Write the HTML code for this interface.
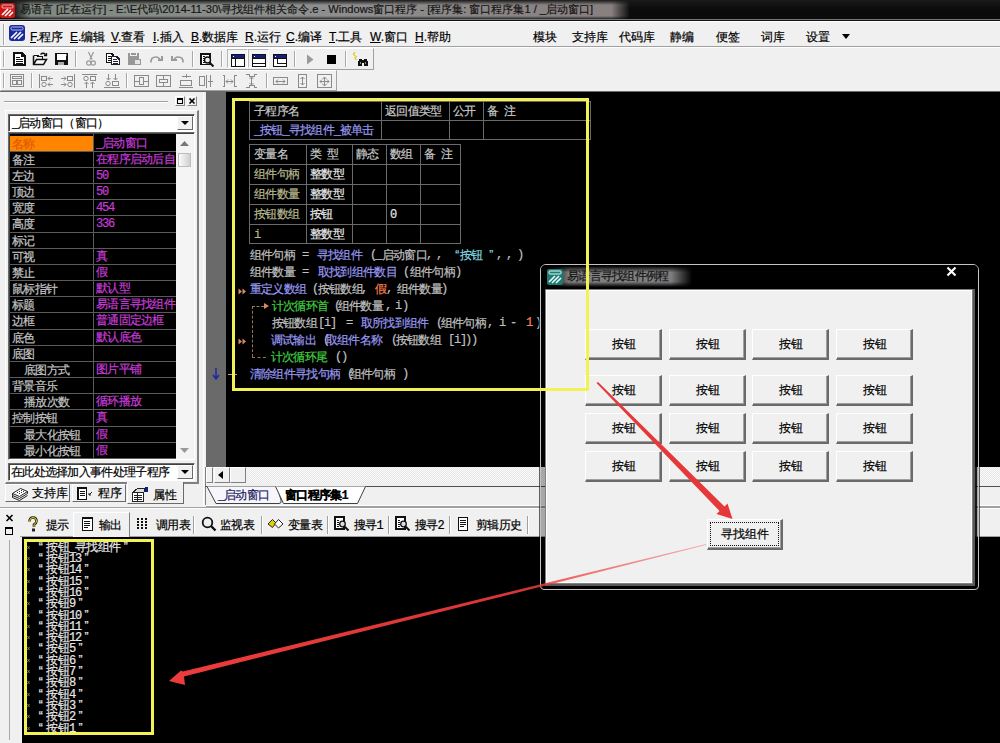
<!DOCTYPE html><html><head><meta charset="utf-8"><style>
*{box-sizing:border-box}
html,body{margin:0;padding:0}
body{width:1000px;height:743px;overflow:hidden;position:relative;background:#f0f0f0;font-family:"Liberation Sans",sans-serif;font-size:12px;color:#000}
.ab{position:absolute}
.t{position:absolute;white-space:nowrap;line-height:1;-webkit-text-stroke:0.2px}
.m{font-family:"Liberation Mono",monospace;letter-spacing:-1.2px}
.c{display:inline-block;width:11.3px;text-align:center}
</style></head><body>

<div class="ab" style="left:0;top:0;width:1000px;height:21px;background:linear-gradient(#1a1a1a,#0c0c0c 40%,#0a0a0a)"></div>
<div class="ab" style="left:12px;top:0px;width:618px;height:20px;background:linear-gradient(90deg,rgba(140,150,140,0),rgba(140,150,140,.9) 3%,rgba(150,150,150,.95) 50%,rgba(150,140,140,.9) 97%,rgba(140,140,140,0));-webkit-mask-image:linear-gradient(transparent,#000 25%,#000 80%,transparent)"></div>
<div class="ab" style="left:0;top:19px;width:1000px;height:1px;background:#777"></div>
<div class="ab" style="left:0;top:20px;width:1000px;height:1px;background:#111"></div>
<svg class="ab" style="left:0;top:3px" width="15" height="15" viewBox="0 0 15 15">
<rect x="0" y="0" width="15" height="15" rx="2" fill="#c81818"/>
<rect x="2" y="2" width="11" height="3" rx="1" fill="none" stroke="#f3b0b0" stroke-width="1"/>
<path d="M2 12 L8 6 M5 13 L11 7 M9 13 L13 9" stroke="#fff" stroke-width="1.6"/></svg>
<div class="t" id="ttl" style="left:20px;top:4px;font-size:11.1px;color:#161616">易语言 [正在运行] - E:\E代码\2014-11-30\寻找组件相关命令.e - Windows窗口程序 - [程序集: 窗口程序集1 / _启动窗口]</div>
<div class="ab" style="left:0;top:21px;width:1000px;height:1px;background:#fff"></div>
<div class="ab" style="left:0;top:46px;width:1000px;height:1px;background:#a0a0a0"></div>
<div class="ab" style="left:0;top:47px;width:1000px;height:1px;background:#fff"></div>
<div class="ab" style="left:3px;top:24px;width:1px;height:21px;background:#a8a8a8"></div>
<div class="ab" style="left:4px;top:24px;width:1px;height:21px;background:#fff"></div>
<svg class="ab" style="left:9px;top:25px" width="16" height="16" viewBox="0 0 16 16">
<rect x="0" y="0" width="16" height="16" rx="3" fill="#1a2a9a"/>
<rect x="2" y="2" width="12" height="3" rx="1.2" fill="none" stroke="#b8c0f0" stroke-width="1"/>
<path d="M2 13 L8 7 M5 14 L12 7 M9 14 L14 9" stroke="#fff" stroke-width="1.6"/></svg>
<div class="t" style="left:30px;top:31px;font-size:12px"><u>F</u>.程序</div>
<div class="t" style="left:70px;top:31px;font-size:12px"><u>E</u>.编辑</div>
<div class="t" style="left:111px;top:31px;font-size:12px"><u>V</u>.查看</div>
<div class="t" style="left:153px;top:31px;font-size:12px"><u>I</u>.插入</div>
<div class="t" style="left:191px;top:31px;font-size:12px"><u>B</u>.数据库</div>
<div class="t" style="left:245px;top:31px;font-size:12px"><u>R</u>.运行</div>
<div class="t" style="left:286px;top:31px;font-size:12px"><u>C</u>.编译</div>
<div class="t" style="left:329px;top:31px;font-size:12px"><u>T</u>.工具</div>
<div class="t" style="left:370px;top:31px;font-size:12px"><u>W</u>.窗口</div>
<div class="t" style="left:415px;top:31px;font-size:12px"><u>H</u>.帮助</div>
<div class="t" style="left:533px;top:31px;font-size:12px">模块</div>
<div class="t" style="left:572px;top:31px;font-size:12px">支持库</div>
<div class="t" style="left:619px;top:31px;font-size:12px">代码库</div>
<div class="t" style="left:670px;top:31px;font-size:12px">静编</div>
<div class="t" style="left:716px;top:31px;font-size:12px">便签</div>
<div class="t" style="left:761px;top:31px;font-size:12px">词库</div>
<div class="t" style="left:806px;top:31px;font-size:12px">设置</div>
<svg class="ab" style="left:842px;top:34px" width="8" height="5"><path d="M0 0H8L4 5Z" fill="#000"/></svg>
<div class="ab" style="left:0px;top:48px;width:374px;height:22px;border-top:1px solid #fff;border-left:1px solid #fff;border-right:1px solid #a0a0a0;border-bottom:1px solid #a0a0a0"></div>
<div class="ab" style="left:3px;top:51px;width:1px;height:16px;background:#a8a8a8"></div>
<div class="ab" style="left:4px;top:51px;width:1px;height:16px;background:#fff"></div>
<div class="ab" style="left:0px;top:70px;width:337px;height:21px;border-top:1px solid #fff;border-left:1px solid #fff;border-right:1px solid #a0a0a0;border-bottom:1px solid #a0a0a0"></div>
<div class="ab" style="left:3px;top:73px;width:1px;height:15px;background:#a8a8a8"></div>
<div class="ab" style="left:4px;top:73px;width:1px;height:15px;background:#fff"></div>
<div class="ab" style="left:0;top:91px;width:1000px;height:1px;background:#6a6a6a"></div>
<div class="ab" style="left:75px;top:51px;width:1px;height:16px;background:#a8a8a8"></div>
<div class="ab" style="left:76px;top:51px;width:1px;height:16px;background:#fff"></div>
<div class="ab" style="left:192px;top:51px;width:1px;height:16px;background:#a8a8a8"></div>
<div class="ab" style="left:193px;top:51px;width:1px;height:16px;background:#fff"></div>
<div class="ab" style="left:221px;top:51px;width:1px;height:16px;background:#a8a8a8"></div>
<div class="ab" style="left:222px;top:51px;width:1px;height:16px;background:#fff"></div>
<div class="ab" style="left:294px;top:51px;width:1px;height:16px;background:#a8a8a8"></div>
<div class="ab" style="left:295px;top:51px;width:1px;height:16px;background:#fff"></div>
<div class="ab" style="left:345px;top:51px;width:1px;height:16px;background:#a8a8a8"></div>
<div class="ab" style="left:346px;top:51px;width:1px;height:16px;background:#fff"></div>
<div class="ab" style="left:31px;top:73px;width:1px;height:15px;background:#a8a8a8"></div>
<div class="ab" style="left:32px;top:73px;width:1px;height:15px;background:#fff"></div>
<div class="ab" style="left:126px;top:73px;width:1px;height:15px;background:#a8a8a8"></div>
<div class="ab" style="left:127px;top:73px;width:1px;height:15px;background:#fff"></div>
<div class="ab" style="left:266px;top:73px;width:1px;height:15px;background:#a8a8a8"></div>
<div class="ab" style="left:267px;top:73px;width:1px;height:15px;background:#fff"></div>
<div class="ab" style="left:227px;top:49px;width:21px;height:19px;border:1px solid;border-color:#b8b8b8 #fff #fff #b8b8b8;background:#f4f4f4"></div>
<div class="ab" style="left:248px;top:49px;width:21px;height:19px;border:1px solid;border-color:#b8b8b8 #fff #fff #b8b8b8;background:#f4f4f4"></div>
<svg class="ab" style="left:13px;top:52px" width="13" height="14" shape-rendering="crispEdges"><path d="M0 0H9L13 4V14H0Z" fill="#111"/><path d="M2 2H8V5H11V12H2Z" fill="#fff"/><path d="M3 5H7V6H3ZM3 7H10V8H3ZM3 9H10V10H3ZM3 11H10V12H3Z" fill="#111"/></svg>
<svg class="ab" style="left:32px;top:52px" width="16" height="14" shape-rendering="crispEdges"><path d="M1.5 3.5H5.5L6.5 4.5H10.5V6.5" fill="none" stroke="#111" stroke-width="1.5"/><path d="M1.5 3.5V12.5H11.5L14.5 7.5H4.5L1.5 12.5" fill="#fff" stroke="#111" stroke-width="1.5" shape-rendering="auto"/><path d="M8.5 2.5Q11 0 13.5 2.5M12 3.5H14.5V1" fill="none" stroke="#111" stroke-width="1.3" shape-rendering="auto"/></svg>
<svg class="ab" style="left:54px;top:52px" width="15" height="14" shape-rendering="crispEdges"><rect x="1" y="1" width="13" height="12" fill="#111"/><rect x="3" y="2" width="9" height="6" fill="#fff"/><rect x="4" y="10" width="6" height="3" fill="#aaa"/><rect x="12" y="2" width="1" height="2" fill="#777"/></svg>
<svg class="ab" style="left:86px;top:51px" width="10" height="16" shape-rendering="crispEdges"><path d="M2.5 1L6 8.5M7.5 1L4 8.5" stroke="#999" stroke-width="1.2" shape-rendering="auto"/><circle cx="2.8" cy="12" r="2.2" fill="none" stroke="#999" stroke-width="1.2" shape-rendering="auto"/><circle cx="7.2" cy="12" r="2.2" fill="none" stroke="#999" stroke-width="1.2" shape-rendering="auto"/></svg>
<svg class="ab" style="left:105px;top:52px" width="16" height="14" shape-rendering="crispEdges"><path d="M1.5 1.5H6.5L8.5 3.5V10.5H1.5Z" fill="#fff" stroke="#111" stroke-width="1.5"/><path d="M3 4.5H6M3 6.5H6M3 8.5H6" stroke="#111"/><path d="M6.5 4.5H11.5L14.5 7.5V12.5H6.5Z" fill="#fff" stroke="#223" stroke-width="1.6"/><path d="M8 7.5H12M8 9.5H13M8 11.5H13" stroke="#223"/></svg>
<svg class="ab" style="left:127px;top:51px" width="15" height="15" shape-rendering="crispEdges"><rect x="1" y="2" width="11" height="12" rx="1.5" fill="#979797"/><rect x="3.5" y="1" width="6" height="3" fill="#979797" stroke="#f0f0f0"/><rect x="7.5" y="8.5" width="6" height="5" fill="#e4e4e4" stroke="#979797"/></svg>
<svg class="ab" style="left:149px;top:55px" width="14" height="9" shape-rendering="crispEdges"><path d="M2 7.5Q1.5 2 7 2Q10 2 11 5" fill="none" stroke="#9a9a9a" stroke-width="1.6" shape-rendering="auto"/><path d="M8.5 5H13V1" fill="none" stroke="#9a9a9a" stroke-width="1.6"/></svg>
<svg class="ab" style="left:171px;top:55px" width="14" height="9" shape-rendering="crispEdges"><path d="M12 7.5Q12.5 2 7 2Q4 2 3 5" fill="none" stroke="#9a9a9a" stroke-width="1.6" shape-rendering="auto"/><path d="M5.5 5H1V1" fill="none" stroke="#9a9a9a" stroke-width="1.6"/></svg>
<svg class="ab" style="left:199px;top:52px" width="16" height="15" shape-rendering="crispEdges"><rect x="1" y="1" width="11" height="12" fill="#111"/><rect x="3" y="2.5" width="7" height="9" fill="#fff"/><path d="M3.5 4.5H6M3.5 6.5H6M3.5 8.5H6M3.5 10.5H6" stroke="#111"/><circle cx="8.5" cy="8" r="3" fill="#eee" stroke="#111" stroke-width="1.4" shape-rendering="auto"/><path d="M10.5 10.5L14.5 14.5" stroke="#111" stroke-width="2" shape-rendering="auto"/></svg>
<svg class="ab" style="left:231px;top:54px" width="14" height="13" shape-rendering="crispEdges"><rect x="0.5" y="0.5" width="13" height="12" fill="#fff" stroke="#111"/><rect x="1" y="1" width="12" height="3" fill="#10207a"/><rect x="2" y="2" width="1" height="1" fill="#fff"/><path d="M4.5 4V12" stroke="#111"/><path d="M1 4.5H13" stroke="#111"/></svg>
<svg class="ab" style="left:252px;top:54px" width="14" height="13" shape-rendering="crispEdges"><rect x="0.5" y="0.5" width="13" height="12" fill="#fff" stroke="#111"/><rect x="1" y="1" width="12" height="3" fill="#10207a"/><rect x="2" y="2" width="1" height="1" fill="#fff"/><path d="M1 4.5H13M1 9.5H13" stroke="#111"/></svg>
<svg class="ab" style="left:273px;top:54px" width="14" height="13" shape-rendering="crispEdges"><rect x="0.5" y="0.5" width="13" height="12" fill="#fff" stroke="#111"/><rect x="1" y="1" width="12" height="3" fill="#10207a"/><rect x="2" y="2" width="1" height="1" fill="#fff"/><path d="M4.5 4V9M1 4.5H13M4 9.5H13" stroke="#111"/></svg>
<svg class="ab" style="left:306px;top:54px" width="8" height="11" shape-rendering="crispEdges"><path d="M1 0.5L7.5 5.5L1 10.5Z" fill="#9a9a9a" shape-rendering="auto"/></svg>
<svg class="ab" style="left:327px;top:55px" width="9" height="9" shape-rendering="crispEdges"><rect x="0" y="0" width="9" height="9" fill="#000"/></svg>
<svg class="ab" style="left:352px;top:51px" width="18" height="16" shape-rendering="crispEdges"><path d="M3.5 1.5Q1.5 1.5 1.5 3Q1.5 4.5 3.5 4.5M5 5.5Q3 5.5 3 7Q3 8.5 5 8.5" fill="none" stroke="#e0c800" stroke-width="1.2" shape-rendering="auto"/><path d="M7 8H10V9H12V8H15V10H16V15H12V12H10V15H6V10H7Z" fill="#111"/><rect x="8" y="11" width="1" height="2" fill="#888"/><rect x="13" y="11" width="1" height="2" fill="#888"/></svg>
<svg class="ab" style="left:10px;top:74px" width="16" height="15" shape-rendering="crispEdges"><rect x="0.5" y="0.5" width="13" height="12" fill="none" stroke="#8a8a8a"/><rect x="2.5" y="2.5" width="9" height="2" fill="none" stroke="#8a8a8a"/><rect x="2.5" y="6.5" width="4" height="4" fill="none" stroke="#8a8a8a"/><rect x="7.5" y="6.5" width="4" height="4" fill="none" stroke="#8a8a8a"/></svg>
<svg class="ab" style="left:39px;top:74px" width="16" height="15" shape-rendering="crispEdges"><path d="M0.5 0V14" stroke="#8a8a8a"/><rect x="2.5" y="2.5" width="5" height="4" fill="none" stroke="#8a8a8a"/><circle cx="5" cy="10.5" r="2.2" fill="none" stroke="#8a8a8a" shape-rendering="auto"/><path d="M9 4.5H14M9 10.5H14" stroke="#8a8a8a"/><path d="M11 2.5L9 4.5L11 6.5M11 8.5L9 10.5L11 12.5" fill="none" stroke="#8a8a8a" shape-rendering="auto"/></svg>
<svg class="ab" style="left:60px;top:74px" width="16" height="15" shape-rendering="crispEdges"><path d="M14.5 0V14" stroke="#8a8a8a"/><rect x="7.5" y="2.5" width="5" height="4" fill="none" stroke="#8a8a8a"/><circle cx="10" cy="10.5" r="2.2" fill="none" stroke="#8a8a8a" shape-rendering="auto"/><path d="M1 4.5H6M1 10.5H6" stroke="#8a8a8a"/><path d="M4 2.5L6 4.5L4 6.5M4 8.5L6 10.5L4 12.5" fill="none" stroke="#8a8a8a" shape-rendering="auto"/></svg>
<svg class="ab" style="left:82px;top:74px" width="16" height="15" shape-rendering="crispEdges"><path d="M0 0.5H15" stroke="#8a8a8a"/><circle cx="4" cy="4.5" r="2.2" fill="none" stroke="#8a8a8a" shape-rendering="auto"/><rect x="8.5" y="2.5" width="5" height="4" fill="none" stroke="#8a8a8a"/><path d="M4.5 8V14M10.5 8V14" stroke="#8a8a8a"/><path d="M2.5 10L4.5 8L6.5 10M8.5 10L10.5 8L12.5 10" fill="none" stroke="#8a8a8a" shape-rendering="auto"/></svg>
<svg class="ab" style="left:104px;top:74px" width="16" height="15" shape-rendering="crispEdges"><path d="M0 13.5H16" stroke="#8a8a8a"/><circle cx="4" cy="9.5" r="2.2" fill="none" stroke="#8a8a8a" shape-rendering="auto"/><rect x="8.5" y="7.5" width="6" height="4" fill="none" stroke="#8a8a8a"/><path d="M4.5 0V6M11.5 0V6" stroke="#8a8a8a"/><path d="M2.5 4L4.5 6L6.5 4M9.5 4L11.5 6L13.5 4" fill="none" stroke="#8a8a8a" shape-rendering="auto"/></svg>
<svg class="ab" style="left:134px;top:74px" width="16" height="15" shape-rendering="crispEdges"><rect x="0.5" y="1.5" width="14" height="11" fill="none" stroke="#8a8a8a"/><rect x="5.5" y="3.5" width="4" height="7" fill="none" stroke="#8a8a8a"/><path d="M1 7.5H5M10 7.5H14" stroke="#8a8a8a"/></svg>
<svg class="ab" style="left:156px;top:74px" width="16" height="15" shape-rendering="crispEdges"><rect x="0.5" y="1.5" width="14" height="11" fill="none" stroke="#8a8a8a"/><rect x="3.5" y="5.5" width="8" height="3" fill="none" stroke="#8a8a8a"/><path d="M7.5 2V5M7.5 9V12" stroke="#8a8a8a"/></svg>
<svg class="ab" style="left:179px;top:74px" width="14" height="15" shape-rendering="crispEdges"><path d="M7.5 0V4M3 2.5H12M0 13.5H14" stroke="#8a8a8a"/><rect x="1.5" y="6.5" width="11" height="5" fill="none" stroke="#8a8a8a"/></svg>
<svg class="ab" style="left:199px;top:74px" width="14" height="15" shape-rendering="crispEdges"><rect x="0.5" y="2.5" width="5" height="9" fill="none" stroke="#8a8a8a"/><path d="M7.5 1V14M11.5 1V13M9 7.5H14" stroke="#8a8a8a"/></svg>
<svg class="ab" style="left:222px;top:74px" width="16" height="15" shape-rendering="crispEdges"><path d="M0.5 1.5H2.5V12.5H0.5M14.5 1.5H12.5V12.5H14.5M4 7.5H11" fill="none" stroke="#8a8a8a"/><path d="M6 5.5L4 7.5L6 9.5M9 5.5L11 7.5L9 9.5" fill="none" stroke="#8a8a8a" shape-rendering="auto"/></svg>
<svg class="ab" style="left:245px;top:74px" width="14" height="15" shape-rendering="crispEdges"><path d="M1 0.5H4V2.5H9V0.5H12M1 13.5H4V11.5H9V13.5H12M6.5 3V11" fill="none" stroke="#8a8a8a"/><path d="M4.5 5L6.5 3L8.5 5M4.5 9L6.5 11L8.5 9" fill="none" stroke="#8a8a8a" shape-rendering="auto"/></svg>
<svg class="ab" style="left:273px;top:74px" width="16" height="15" shape-rendering="crispEdges"><rect x="0.5" y="3.5" width="14" height="7" fill="none" stroke="#8a8a8a"/><path d="M3 7.5H12" stroke="#8a8a8a"/><path d="M5 5.5L3 7.5L5 9.5M10 5.5L12 7.5L10 9.5" fill="none" stroke="#8a8a8a" shape-rendering="auto"/></svg>
<svg class="ab" style="left:297px;top:74px" width="12" height="15" shape-rendering="crispEdges"><rect x="1.5" y="0.5" width="8" height="13" fill="none" stroke="#8a8a8a"/><path d="M5.5 3V11" stroke="#8a8a8a"/><path d="M3.5 5L5.5 3L7.5 5M3.5 9L5.5 11L7.5 9" fill="none" stroke="#8a8a8a" shape-rendering="auto"/></svg>
<svg class="ab" style="left:317px;top:74px" width="16" height="15" shape-rendering="crispEdges"><rect x="0.5" y="0.5" width="14" height="13" fill="none" stroke="#8a8a8a"/><path d="M3 7.5H12M7.5 3V12" stroke="#8a8a8a"/><path d="M5 5.5L3 7.5L5 9.5M10 5.5L12 7.5L10 9.5M5.5 5L7.5 3L9.5 5M5.5 10L7.5 12L9.5 10" fill="none" stroke="#8a8a8a" shape-rendering="auto"/></svg>
<div class="ab" style="left:0;top:92px;width:205px;height:416px;background:#f0f0f0"></div>
<div class="ab" style="left:203px;top:92px;width:1px;height:414px;background:#fff"></div>
<div class="ab" style="left:4px;top:101px;width:164px;height:1px;background:#a0a0a0"></div>
<div class="ab" style="left:4px;top:102px;width:164px;height:1px;background:#fff"></div>
<div class="ab" style="left:175px;top:96px;width:10px;height:10px;border:1px solid;border-color:#fff #888 #888 #fff"></div>
<div class="ab" style="left:177px;top:98px;width:6px;height:6px;border:1px solid #000;border-top-width:2px"></div>
<div class="ab" style="left:187px;top:96px;width:10px;height:10px;border:1px solid;border-color:#fff #888 #888 #fff"></div>
<svg class="ab" style="left:188px;top:97px" width="8" height="8"><path d="M1.5 1.5L6.5 6.5M6.5 1.5L1.5 6.5" stroke="#000" stroke-width="1.6"/></svg>
<div class="ab" style="left:5px;top:110px;width:194px;height:374px;border-style:solid;border-width:1px 2px 2px 1px;border-color:#fff #808080 #808080 #fff"></div>
<div class="ab" style="left:8px;top:114px;width:187px;height:18px;background:#fff;border:1px solid;border-color:#6a6a6a #fff #fff #6a6a6a;box-shadow:inset 1px 1px 0 #404040"></div>
<div class="t" style="left:12px;top:117px;font-size:12px"><span class="m">_</span><span class="c">启</span><span class="c">动</span><span class="c">窗</span><span class="c">口</span><span class="c">（</span><span class="c">窗</span><span class="c">口</span><span class="c">）</span></div>
<div class="ab" style="left:177px;top:116px;width:16px;height:14px;background:#f0f0f0;border:1px solid;border-color:#fff #6a6a6a #6a6a6a #fff"></div>
<svg class="ab" style="left:181px;top:121px" width="8" height="4"><path d="M0 0H8L4 4Z" fill="#000"/></svg>
<div class="ab" style="left:8px;top:132px;width:187px;height:328px;background:#f0f0f0;border:1px solid;border-color:#6a6a6a #fff #fff #6a6a6a;box-shadow:inset 1px 1px 0 #404040"></div>
<div class="ab" style="left:10px;top:134px;width:166px;height:325px;background:#000"></div>
<div class="ab" style="left:10px;top:136px;width:83px;height:15px;background:#ff8400"></div>
<div class="t" style="left:12px;top:138px;font-size:12px;color:#e05a00"><span class="c">名</span><span class="c">称</span></div>
<div class="t" style="left:96px;top:136px;font-size:12px;line-height:15px;height:15px;color:#c83cd8;width:80px;overflow:hidden"><span class="m">_</span><span class="c">启</span><span class="c">动</span><span class="c">窗</span><span class="c">口</span></div>
<div class="ab" style="left:10px;top:151px;width:166px;height:1px;background:#5a5a5a"></div>
<div class="t" style="left:12px;top:154px;font-size:12px;color:#c4c4c4"><span class="c">备</span><span class="c">注</span></div>
<div class="t" style="left:96px;top:152px;font-size:12px;line-height:15px;height:15px;color:#c83cd8;width:80px;overflow:hidden"><span class="c">在</span><span class="c">程</span><span class="c">序</span><span class="c">启</span><span class="c">动</span><span class="c">后</span><span class="c">自</span></div>
<div class="ab" style="left:10px;top:167px;width:166px;height:1px;background:#5a5a5a"></div>
<div class="t" style="left:12px;top:170px;font-size:12px;color:#c4c4c4"><span class="c">左</span><span class="c">边</span></div>
<div class="t" style="left:96px;top:168px;font-size:12px;line-height:15px;height:15px;color:#c83cd8;width:80px;overflow:hidden"><span class="m">50</span></div>
<div class="ab" style="left:10px;top:183px;width:166px;height:1px;background:#5a5a5a"></div>
<div class="t" style="left:12px;top:186px;font-size:12px;color:#c4c4c4"><span class="c">顶</span><span class="c">边</span></div>
<div class="t" style="left:96px;top:184px;font-size:12px;line-height:15px;height:15px;color:#c83cd8;width:80px;overflow:hidden"><span class="m">50</span></div>
<div class="ab" style="left:10px;top:199px;width:166px;height:1px;background:#5a5a5a"></div>
<div class="t" style="left:12px;top:202px;font-size:12px;color:#c4c4c4"><span class="c">宽</span><span class="c">度</span></div>
<div class="t" style="left:96px;top:200px;font-size:12px;line-height:15px;height:15px;color:#c83cd8;width:80px;overflow:hidden"><span class="m">454</span></div>
<div class="ab" style="left:10px;top:215px;width:166px;height:1px;background:#5a5a5a"></div>
<div class="t" style="left:12px;top:218px;font-size:12px;color:#c4c4c4"><span class="c">高</span><span class="c">度</span></div>
<div class="t" style="left:96px;top:216px;font-size:12px;line-height:15px;height:15px;color:#c83cd8;width:80px;overflow:hidden"><span class="m">336</span></div>
<div class="ab" style="left:10px;top:232px;width:166px;height:1px;background:#5a5a5a"></div>
<div class="t" style="left:12px;top:235px;font-size:12px;color:#c4c4c4"><span class="c">标</span><span class="c">记</span></div>
<div class="t" style="left:96px;top:233px;font-size:12px;line-height:15px;height:15px;color:#c83cd8;width:80px;overflow:hidden"></div>
<div class="ab" style="left:10px;top:248px;width:166px;height:1px;background:#5a5a5a"></div>
<div class="t" style="left:12px;top:251px;font-size:12px;color:#c4c4c4"><span class="c">可</span><span class="c">视</span></div>
<div class="t" style="left:96px;top:249px;font-size:12px;line-height:15px;height:15px;color:#c83cd8;width:80px;overflow:hidden"><span class="c">真</span></div>
<div class="ab" style="left:10px;top:264px;width:166px;height:1px;background:#5a5a5a"></div>
<div class="t" style="left:12px;top:267px;font-size:12px;color:#c4c4c4"><span class="c">禁</span><span class="c">止</span></div>
<div class="t" style="left:96px;top:265px;font-size:12px;line-height:15px;height:15px;color:#c83cd8;width:80px;overflow:hidden"><span class="c">假</span></div>
<div class="ab" style="left:10px;top:280px;width:166px;height:1px;background:#5a5a5a"></div>
<div class="t" style="left:12px;top:283px;font-size:12px;color:#c4c4c4"><span class="c">鼠</span><span class="c">标</span><span class="c">指</span><span class="c">针</span></div>
<div class="t" style="left:96px;top:281px;font-size:12px;line-height:15px;height:15px;color:#c83cd8;width:80px;overflow:hidden"><span class="c">默</span><span class="c">认</span><span class="c">型</span></div>
<div class="ab" style="left:10px;top:296px;width:166px;height:1px;background:#5a5a5a"></div>
<div class="t" style="left:12px;top:299px;font-size:12px;color:#c4c4c4"><span class="c">标</span><span class="c">题</span></div>
<div class="t" style="left:96px;top:297px;font-size:12px;line-height:15px;height:15px;color:#c83cd8;width:80px;overflow:hidden"><span class="c">易</span><span class="c">语</span><span class="c">言</span><span class="c">寻</span><span class="c">找</span><span class="c">组</span><span class="c">件</span></div>
<div class="ab" style="left:10px;top:312px;width:166px;height:1px;background:#5a5a5a"></div>
<div class="t" style="left:12px;top:315px;font-size:12px;color:#c4c4c4"><span class="c">边</span><span class="c">框</span></div>
<div class="t" style="left:96px;top:313px;font-size:12px;line-height:15px;height:15px;color:#c83cd8;width:80px;overflow:hidden"><span class="c">普</span><span class="c">通</span><span class="c">固</span><span class="c">定</span><span class="c">边</span><span class="c">框</span></div>
<div class="ab" style="left:10px;top:329px;width:166px;height:1px;background:#5a5a5a"></div>
<div class="t" style="left:12px;top:332px;font-size:12px;color:#c4c4c4"><span class="c">底</span><span class="c">色</span></div>
<div class="t" style="left:96px;top:330px;font-size:12px;line-height:15px;height:15px;color:#c83cd8;width:80px;overflow:hidden"><span class="c">默</span><span class="c">认</span><span class="c">底</span><span class="c">色</span></div>
<div class="ab" style="left:10px;top:345px;width:166px;height:1px;background:#5a5a5a"></div>
<div class="t" style="left:12px;top:348px;font-size:12px;color:#c4c4c4"><span class="c">底</span><span class="c">图</span></div>
<div class="t" style="left:96px;top:346px;font-size:12px;line-height:15px;height:15px;color:#c83cd8;width:80px;overflow:hidden"></div>
<div class="ab" style="left:10px;top:361px;width:166px;height:1px;background:#5a5a5a"></div>
<div class="t" style="left:24px;top:364px;font-size:12px;color:#c4c4c4"><span class="c">底</span><span class="c">图</span><span class="c">方</span><span class="c">式</span></div>
<div class="t" style="left:96px;top:362px;font-size:12px;line-height:15px;height:15px;color:#c83cd8;width:80px;overflow:hidden"><span class="c">图</span><span class="c">片</span><span class="c">平</span><span class="c">铺</span></div>
<div class="ab" style="left:10px;top:377px;width:166px;height:1px;background:#5a5a5a"></div>
<div class="t" style="left:12px;top:380px;font-size:12px;color:#c4c4c4"><span class="c">背</span><span class="c">景</span><span class="c">音</span><span class="c">乐</span></div>
<div class="t" style="left:96px;top:378px;font-size:12px;line-height:15px;height:15px;color:#c83cd8;width:80px;overflow:hidden"></div>
<div class="ab" style="left:10px;top:393px;width:166px;height:1px;background:#5a5a5a"></div>
<div class="t" style="left:24px;top:396px;font-size:12px;color:#c4c4c4"><span class="c">播</span><span class="c">放</span><span class="c">次</span><span class="c">数</span></div>
<div class="t" style="left:96px;top:394px;font-size:12px;line-height:15px;height:15px;color:#c83cd8;width:80px;overflow:hidden"><span class="c">循</span><span class="c">环</span><span class="c">播</span><span class="c">放</span></div>
<div class="ab" style="left:10px;top:409px;width:166px;height:1px;background:#5a5a5a"></div>
<div class="t" style="left:12px;top:412px;font-size:12px;color:#c4c4c4"><span class="c">控</span><span class="c">制</span><span class="c">按</span><span class="c">钮</span></div>
<div class="t" style="left:96px;top:410px;font-size:12px;line-height:15px;height:15px;color:#c83cd8;width:80px;overflow:hidden"><span class="c">真</span></div>
<div class="ab" style="left:10px;top:426px;width:166px;height:1px;background:#5a5a5a"></div>
<div class="t" style="left:24px;top:429px;font-size:12px;color:#c4c4c4"><span class="c">最</span><span class="c">大</span><span class="c">化</span><span class="c">按</span><span class="c">钮</span></div>
<div class="t" style="left:96px;top:427px;font-size:12px;line-height:15px;height:15px;color:#c83cd8;width:80px;overflow:hidden"><span class="c">假</span></div>
<div class="ab" style="left:10px;top:442px;width:166px;height:1px;background:#5a5a5a"></div>
<div class="t" style="left:24px;top:445px;font-size:12px;color:#c4c4c4"><span class="c">最</span><span class="c">小</span><span class="c">化</span><span class="c">按</span><span class="c">钮</span></div>
<div class="t" style="left:96px;top:443px;font-size:12px;line-height:15px;height:15px;color:#c83cd8;width:80px;overflow:hidden"><span class="c">假</span></div>
<div class="ab" style="left:10px;top:458px;width:166px;height:1px;background:#5a5a5a"></div>
<div class="ab" style="left:93px;top:134px;width:1px;height:325px;background:#5a5a5a"></div>
<div class="ab" style="left:176px;top:134px;width:17px;height:325px;background:#f4f4f4"></div>
<svg class="ab" style="left:180px;top:141px" width="9" height="5"><path d="M0 5H9L4.5 0Z" fill="#777"/></svg>
<div class="ab" style="left:178px;top:153px;width:13px;height:14px;background:linear-gradient(90deg,#fafafa,#d0d0d0);border:1px solid #bcbcbc"></div>
<svg class="ab" style="left:180px;top:448px" width="9" height="5"><path d="M0 0H9L4.5 5Z" fill="#999"/></svg>
<div class="ab" style="left:8px;top:463px;width:187px;height:18px;background:#fff;border:1px solid;border-color:#6a6a6a #fff #fff #6a6a6a;box-shadow:inset 1px 1px 0 #404040"></div>
<div class="t" style="left:11px;top:466px;font-size:12px"><span class="c">在</span><span class="c">此</span><span class="c">处</span><span class="c">选</span><span class="c">择</span><span class="c">加</span><span class="c">入</span><span class="c">事</span><span class="c">件</span><span class="c">处</span><span class="c">理</span><span class="c">子</span><span class="c">程</span><span class="c">序</span></div>
<div class="ab" style="left:177px;top:465px;width:16px;height:14px;background:#f0f0f0;border:1px solid;border-color:#fff #6a6a6a #6a6a6a #fff"></div>
<svg class="ab" style="left:181px;top:470px" width="8" height="4"><path d="M0 0H8L4 4Z" fill="#000"/></svg>
<div class="ab" style="left:5px;top:484px;width:65px;height:18px;border:1px solid;border-color:#fff #6a6a6a #6a6a6a #fff;background:#f0f0f0"></div>
<svg class="ab" style="left:11px;top:486px" width="18" height="15"><path d="M1.5 7.5L9.5 2.5L16.5 5.5L8.5 10.5Z" fill="#fff" stroke="#222"/><path d="M1.5 7.5V9.5L8.5 12.5L16.5 7.5V5.5M1.5 9.5V11.5L8.5 14.5L16.5 9.5" fill="none" stroke="#222"/><path d="M6 6.5H7M8 5.5H9M10 4.5H11M8 7.5H9M10 6.5H11M12 5.5H13" stroke="#333"/></svg>
<div class="t" style="left:32px;top:487px;font-size:12px">支持库</div>
<div class="ab" style="left:72px;top:484px;width:54px;height:18px;border:1px solid;border-color:#fff #6a6a6a #6a6a6a #fff;background:#f0f0f0"></div>
<svg class="ab" style="left:77px;top:487px" width="17" height="13" shape-rendering="crispEdges"><path d="M0 0H10V13H0Z" fill="#111"/><path d="M1.5 1.5H8.5V11.5H1.5Z" fill="#fff"/><path d="M3 4H8V5H3ZM3 6H8V7H3ZM3 8H8V9H3Z" fill="#111"/><path d="M15 5L12 8M12 6V8H14" fill="none" stroke="#222" shape-rendering="auto"/></svg>
<div class="t" style="left:98px;top:487px;font-size:12px">程序</div>
<div class="ab" style="left:127px;top:482px;width:57px;height:22px;border-left:1px solid #fff;border-right:1px solid #6a6a6a;border-bottom:1px solid #6a6a6a;background:#f0f0f0"></div>
<svg class="ab" style="left:132px;top:487px" width="17" height="15" shape-rendering="crispEdges"><path d="M0.5 5.5L5.5 1.5H12.5V4.5" fill="#ddd" stroke="#222"/><rect x="0.5" y="5.5" width="11" height="9" fill="#fff" stroke="#222"/><path d="M2 8.5H10M2 10.5H10M2 12.5H10M5.5 6V14" stroke="#222"/><rect x="13" y="0" width="3" height="5" fill="#10207a"/></svg>
<div class="t" style="left:153px;top:489px;font-size:12px">属性</div>
<div class="ab" style="left:206px;top:92px;width:20px;height:375px;background:#6a6a6a"></div>
<div class="ab" style="left:226px;top:92px;width:774px;height:375px;background:#000"></div>
<div class="ab" style="left:249px;top:101px;width:342px;height:1px;background:#6a6a6a"></div>
<div class="ab" style="left:249px;top:120px;width:342px;height:1px;background:#6a6a6a"></div>
<div class="ab" style="left:249px;top:139px;width:342px;height:1px;background:#6a6a6a"></div>
<div class="ab" style="left:249px;top:101px;width:1px;height:39px;background:#6a6a6a"></div>
<div class="ab" style="left:381px;top:101px;width:1px;height:39px;background:#6a6a6a"></div>
<div class="ab" style="left:449px;top:101px;width:1px;height:39px;background:#6a6a6a"></div>
<div class="ab" style="left:483px;top:101px;width:1px;height:39px;background:#6a6a6a"></div>
<div class="ab" style="left:590px;top:101px;width:1px;height:39px;background:#6a6a6a"></div>
<div class="t" style="left:254px;top:105px;font-size:12px;color:#c8c8c8;"><span class="c">子</span><span class="c">程</span><span class="c">序</span><span class="c">名</span></div>
<div class="t" style="left:385px;top:105px;font-size:12px;color:#c8c8c8;"><span class="c">返</span><span class="c">回</span><span class="c">值</span><span class="c">类</span><span class="c">型</span></div>
<div class="t" style="left:453px;top:105px;font-size:12px;color:#c8c8c8;"><span class="c">公</span><span class="c">开</span></div>
<div class="t" style="left:487px;top:105px;font-size:12px;color:#c8c8c8;"><span class="c">备</span><span class="m">&#160;</span><span class="c">注</span></div>
<div class="t" style="left:254px;top:124px;font-size:12px;color:#9898f0;"><span class="m">_</span><span class="c">按</span><span class="c">钮</span><span class="m">_</span><span class="c">寻</span><span class="c">找</span><span class="c">组</span><span class="c">件</span><span class="m">_</span><span class="c">被</span><span class="c">单</span><span class="c">击</span></div>
<div class="ab" style="left:249px;top:144px;width:212px;height:1px;background:#6a6a6a"></div>
<div class="ab" style="left:249px;top:164px;width:212px;height:1px;background:#6a6a6a"></div>
<div class="ab" style="left:249px;top:184px;width:212px;height:1px;background:#6a6a6a"></div>
<div class="ab" style="left:249px;top:204px;width:212px;height:1px;background:#6a6a6a"></div>
<div class="ab" style="left:249px;top:224px;width:212px;height:1px;background:#6a6a6a"></div>
<div class="ab" style="left:249px;top:243px;width:212px;height:1px;background:#6a6a6a"></div>
<div class="ab" style="left:249px;top:144px;width:1px;height:100px;background:#6a6a6a"></div>
<div class="ab" style="left:306px;top:144px;width:1px;height:100px;background:#6a6a6a"></div>
<div class="ab" style="left:352px;top:144px;width:1px;height:100px;background:#6a6a6a"></div>
<div class="ab" style="left:386px;top:144px;width:1px;height:100px;background:#6a6a6a"></div>
<div class="ab" style="left:420px;top:144px;width:1px;height:100px;background:#6a6a6a"></div>
<div class="ab" style="left:460px;top:144px;width:1px;height:100px;background:#6a6a6a"></div>
<div class="t" style="left:254px;top:148px;font-size:12px;color:#c8c8c8;"><span class="c">变</span><span class="c">量</span><span class="c">名</span></div>
<div class="t" style="left:310px;top:148px;font-size:12px;color:#c8c8c8;"><span class="c">类</span><span class="m">&#160;</span><span class="c">型</span></div>
<div class="t" style="left:356px;top:148px;font-size:12px;color:#c8c8c8;"><span class="c">静</span><span class="c">态</span></div>
<div class="t" style="left:390px;top:148px;font-size:12px;color:#c8c8c8;"><span class="c">数</span><span class="c">组</span></div>
<div class="t" style="left:424px;top:148px;font-size:12px;color:#c8c8c8;"><span class="c">备</span><span class="m">&#160;</span><span class="c">注</span></div>
<div class="t" style="left:254px;top:168px;font-size:12px;color:#b8b890;"><span class="c">组</span><span class="c">件</span><span class="c">句</span><span class="c">柄</span></div>
<div class="t" style="left:310px;top:168px;font-size:12px;color:#e8e8e8;"><span class="c">整</span><span class="c">数</span><span class="c">型</span></div>
<div class="t" style="left:254px;top:188px;font-size:12px;color:#b8b890;"><span class="c">组</span><span class="c">件</span><span class="c">数</span><span class="c">量</span></div>
<div class="t" style="left:310px;top:188px;font-size:12px;color:#e8e8e8;"><span class="c">整</span><span class="c">数</span><span class="c">型</span></div>
<div class="t" style="left:254px;top:208px;font-size:12px;color:#b8b890;"><span class="c">按</span><span class="c">钮</span><span class="c">数</span><span class="c">组</span></div>
<div class="t" style="left:310px;top:208px;font-size:12px;color:#e8e8e8;"><span class="c">按</span><span class="c">钮</span></div>
<div class="t" style="left:390px;top:208px;font-size:12px;color:#e8e8e8;"><span class="m">0</span></div>
<div class="t" style="left:254px;top:228px;font-size:12px;color:#b8b890;"><span class="m">i</span></div>
<div class="t" style="left:310px;top:228px;font-size:12px;color:#e8e8e8;"><span class="c">整</span><span class="c">数</span><span class="c">型</span></div>
<div class="t" style="left:249.5px;top:248.5px;font-size:12px;color:#c0c0c0;white-space:pre"><span class="c" style="width:11.4px">组</span><span class="c" style="width:11.4px">件</span><span class="c" style="width:11.4px">句</span><span class="c" style="width:11.4px">柄</span></div>
<div class="t m" style="left:302px;top:248.5px;font-size:12px;color:#c0c0c0;white-space:pre">=</div>
<div class="t" style="left:316.5px;top:248.5px;font-size:12px;color:#9898f0;white-space:pre"><span class="c" style="width:11.4px">寻</span><span class="c" style="width:11.4px">找</span><span class="c" style="width:11.4px">组</span><span class="c" style="width:11.4px">件</span></div>
<div class="t m" style="left:370px;top:248.5px;font-size:12px;color:#c0c0c0;white-space:pre">(</div>
<div class="t m" style="left:375px;top:248.5px;font-size:12px;color:#c0c0c0;white-space:pre">_</div>
<div class="t" style="left:381.5px;top:248.5px;font-size:12px;color:#c0c0c0;white-space:pre"><span class="c" style="width:11.4px">启</span><span class="c" style="width:11.4px">动</span><span class="c" style="width:11.4px">窗</span><span class="c" style="width:11.4px">口</span></div>
<div class="t m" style="left:426px;top:248.5px;font-size:12px;color:#c0c0c0;white-space:pre">,</div>
<div class="t m" style="left:436px;top:248.5px;font-size:12px;color:#c0c0c0;white-space:pre">,</div>
<div class="t" style="left:451.5px;top:248.5px;font-size:12px;color:#80d8e0;white-space:pre"><span class="c" style="width:11.4px">“</span></div>
<div class="t" style="left:459.5px;top:248.5px;font-size:12px;color:#80d8e0;white-space:pre"><span class="c" style="width:11.4px">按</span><span class="c" style="width:11.4px">钮</span></div>
<div class="t" style="left:485.5px;top:248.5px;font-size:12px;color:#80d8e0;white-space:pre"><span class="c" style="width:11.4px">”</span></div>
<div class="t m" style="left:496px;top:248.5px;font-size:12px;color:#c0c0c0;white-space:pre">,</div>
<div class="t m" style="left:506px;top:248.5px;font-size:12px;color:#c0c0c0;white-space:pre">,</div>
<div class="t m" style="left:517px;top:248.5px;font-size:12px;color:#c0c0c0;white-space:pre">)</div>
<div class="t" style="left:249.5px;top:265.5px;font-size:12px;color:#c0c0c0;white-space:pre"><span class="c" style="width:11.4px">组</span><span class="c" style="width:11.4px">件</span><span class="c" style="width:11.4px">数</span><span class="c" style="width:11.4px">量</span></div>
<div class="t m" style="left:302px;top:265.5px;font-size:12px;color:#c0c0c0;white-space:pre">=</div>
<div class="t" style="left:317.5px;top:265.5px;font-size:12px;color:#9898f0;white-space:pre"><span class="c" style="width:11.4px">取</span><span class="c" style="width:11.4px">找</span><span class="c" style="width:11.4px">到</span><span class="c" style="width:11.4px">组</span><span class="c" style="width:11.4px">件</span><span class="c" style="width:11.4px">数</span><span class="c" style="width:11.4px">目</span></div>
<div class="t m" style="left:403px;top:265.5px;font-size:12px;color:#c0c0c0;white-space:pre">(</div>
<div class="t" style="left:409.5px;top:265.5px;font-size:12px;color:#c0c0c0;white-space:pre"><span class="c" style="width:11.4px">组</span><span class="c" style="width:11.4px">件</span><span class="c" style="width:11.4px">句</span><span class="c" style="width:11.4px">柄</span></div>
<div class="t m" style="left:455px;top:265.5px;font-size:12px;color:#c0c0c0;white-space:pre">)</div>
<div class="t" style="left:249.5px;top:282.5px;font-size:12px;color:#9898f0;white-space:pre"><span class="c" style="width:11.4px">重</span><span class="c" style="width:11.4px">定</span><span class="c" style="width:11.4px">义</span><span class="c" style="width:11.4px">数</span><span class="c" style="width:11.4px">组</span></div>
<div class="t m" style="left:312px;top:282.5px;font-size:12px;color:#c0c0c0;white-space:pre">(</div>
<div class="t" style="left:317.5px;top:282.5px;font-size:12px;color:#c0c0c0;white-space:pre"><span class="c" style="width:11.4px">按</span><span class="c" style="width:11.4px">钮</span><span class="c" style="width:11.4px">数</span><span class="c" style="width:11.4px">组</span></div>
<div class="t m" style="left:361px;top:282.5px;font-size:12px;color:#c0c0c0;white-space:pre">,</div>
<div class="t" style="left:374.5px;top:282.5px;font-size:12px;color:#ff8050;white-space:pre"><span class="c" style="width:11.4px">假</span></div>
<div class="t m" style="left:386px;top:282.5px;font-size:12px;color:#c0c0c0;white-space:pre">,</div>
<div class="t" style="left:396.5px;top:282.5px;font-size:12px;color:#c0c0c0;white-space:pre"><span class="c" style="width:11.4px">组</span><span class="c" style="width:11.4px">件</span><span class="c" style="width:11.4px">数</span><span class="c" style="width:11.4px">量</span></div>
<div class="t m" style="left:441px;top:282.5px;font-size:12px;color:#c0c0c0;white-space:pre">)</div>
<div class="t" style="left:271.5px;top:299.5px;font-size:12px;color:#40d040;white-space:pre"><span class="c" style="width:11.4px">计</span><span class="c" style="width:11.4px">次</span><span class="c" style="width:11.4px">循</span><span class="c" style="width:11.4px">环</span><span class="c" style="width:11.4px">首</span></div>
<div class="t m" style="left:334px;top:299.5px;font-size:12px;color:#c0c0c0;white-space:pre">(</div>
<div class="t" style="left:337.5px;top:299.5px;font-size:12px;color:#c0c0c0;white-space:pre"><span class="c" style="width:11.4px">组</span><span class="c" style="width:11.4px">件</span><span class="c" style="width:11.4px">数</span><span class="c" style="width:11.4px">量</span></div>
<div class="t m" style="left:385px;top:299.5px;font-size:12px;color:#c0c0c0;white-space:pre">,</div>
<div class="t m" style="left:395px;top:299.5px;font-size:12px;color:#c0c0c0;white-space:pre">i</div>
<div class="t m" style="left:402px;top:299.5px;font-size:12px;color:#c0c0c0;white-space:pre">)</div>
<div class="t" style="left:271.5px;top:316.5px;font-size:12px;color:#c0c0c0;white-space:pre"><span class="c" style="width:11.4px">按</span><span class="c" style="width:11.4px">钮</span><span class="c" style="width:11.4px">数</span><span class="c" style="width:11.4px">组</span></div>
<div class="t m" style="left:318px;top:316.5px;font-size:12px;color:#c0c0c0;white-space:pre">[i]</div>
<div class="t m" style="left:346px;top:316.5px;font-size:12px;color:#c0c0c0;white-space:pre">=</div>
<div class="t" style="left:360.5px;top:316.5px;font-size:12px;color:#9898f0;white-space:pre"><span class="c" style="width:11.4px">取</span><span class="c" style="width:11.4px">所</span><span class="c" style="width:11.4px">找</span><span class="c" style="width:11.4px">到</span><span class="c" style="width:11.4px">组</span><span class="c" style="width:11.4px">件</span></div>
<div class="t m" style="left:436px;top:316.5px;font-size:12px;color:#c0c0c0;white-space:pre">(</div>
<div class="t" style="left:440.5px;top:316.5px;font-size:12px;color:#c0c0c0;white-space:pre"><span class="c" style="width:11.4px">组</span><span class="c" style="width:11.4px">件</span><span class="c" style="width:11.4px">句</span><span class="c" style="width:11.4px">柄</span></div>
<div class="t m" style="left:487px;top:316.5px;font-size:12px;color:#c0c0c0;white-space:pre">,</div>
<div class="t m" style="left:499px;top:316.5px;font-size:12px;color:#c0c0c0;white-space:pre">i</div>
<div class="t m" style="left:510px;top:316.5px;font-size:12px;color:#c0c0c0;white-space:pre">-</div>
<div class="t m" style="left:526px;top:316.5px;font-size:12px;color:#ff8050;white-space:pre">1</div>
<div class="t m" style="left:535px;top:316.5px;font-size:12px;color:#c0c0c0;white-space:pre">)</div>
<div class="t" style="left:270.5px;top:333.5px;font-size:12px;color:#9898f0;white-space:pre"><span class="c" style="width:11.4px">调</span><span class="c" style="width:11.4px">试</span><span class="c" style="width:11.4px">输</span><span class="c" style="width:11.4px">出</span></div>
<div class="t m" style="left:323px;top:333.5px;font-size:12px;color:#c0c0c0;white-space:pre">(</div>
<div class="t" style="left:325.5px;top:333.5px;font-size:12px;color:#9898f0;white-space:pre"><span class="c" style="width:11.4px">取</span><span class="c" style="width:11.4px">组</span><span class="c" style="width:11.4px">件</span><span class="c" style="width:11.4px">名</span><span class="c" style="width:11.4px">称</span></div>
<div class="t m" style="left:391px;top:333.5px;font-size:12px;color:#c0c0c0;white-space:pre">(</div>
<div class="t" style="left:395.5px;top:333.5px;font-size:12px;color:#c0c0c0;white-space:pre"><span class="c" style="width:11.4px">按</span><span class="c" style="width:11.4px">钮</span><span class="c" style="width:11.4px">数</span><span class="c" style="width:11.4px">组</span></div>
<div class="t m" style="left:448px;top:333.5px;font-size:12px;color:#c0c0c0;white-space:pre">[i]</div>
<div class="t m" style="left:465px;top:333.5px;font-size:12px;color:#c0c0c0;white-space:pre">))</div>
<div class="t" style="left:270.5px;top:350.5px;font-size:12px;color:#40d040;white-space:pre"><span class="c" style="width:11.4px">计</span><span class="c" style="width:11.4px">次</span><span class="c" style="width:11.4px">循</span><span class="c" style="width:11.4px">环</span><span class="c" style="width:11.4px">尾</span></div>
<div class="t m" style="left:335px;top:350.5px;font-size:12px;color:#c0c0c0;white-space:pre">()</div>
<div class="t" style="left:249.5px;top:367.5px;font-size:12px;color:#9898f0;white-space:pre"><span class="c" style="width:11.4px">清</span><span class="c" style="width:11.4px">除</span><span class="c" style="width:11.4px">组</span><span class="c" style="width:11.4px">件</span><span class="c" style="width:11.4px">寻</span><span class="c" style="width:11.4px">找</span><span class="c" style="width:11.4px">句</span><span class="c" style="width:11.4px">柄</span></div>
<div class="t m" style="left:347px;top:367.5px;font-size:12px;color:#c0c0c0;white-space:pre">(</div>
<div class="t" style="left:349.5px;top:367.5px;font-size:12px;color:#c0c0c0;white-space:pre"><span class="c" style="width:11.4px">组</span><span class="c" style="width:11.4px">件</span><span class="c" style="width:11.4px">句</span><span class="c" style="width:11.4px">柄</span></div>
<div class="t m" style="left:402px;top:367.5px;font-size:12px;color:#c0c0c0;white-space:pre">)</div>
<svg class="ab" style="left:238px;top:288px" width="9" height="7"><path d="M0.5 0.5L4 3.5L0.5 6.5ZM4.5 0.5L8 3.5L4.5 6.5Z" fill="#d88a66"/></svg>
<svg class="ab" style="left:238px;top:338px" width="9" height="7"><path d="M0.5 0.5L4 3.5L0.5 6.5ZM4.5 0.5L8 3.5L4.5 6.5Z" fill="#d88a66"/></svg>
<div class="ab" style="left:252px;top:306px;width:0;height:51px;border-left:1px dashed #9a7458"></div>
<div class="ab" style="left:252px;top:306px;width:12px;height:0;border-top:1px dashed #9a7458"></div>
<svg class="ab" style="left:264px;top:302px" width="5" height="8"><path d="M0 1L5 4L0 7Z" fill="#d88a66"/></svg>
<div class="ab" style="left:252px;top:357px;width:14px;height:0;border-top:1px dashed #9a7458"></div>
<div class="ab" style="left:228px;top:374px;width:9px;height:1px;background:#d8a070"></div>
<svg class="ab" style="left:212px;top:368px" width="8" height="12"><path d="M4 0V10M1 7L4 11L7 7" fill="none" stroke="#1a2aa0" stroke-width="1.5"/></svg>
<div class="ab" style="left:206px;top:467px;width:794px;height:16px;background:repeating-conic-gradient(#fbfbfb 0 25%,#e6e6e6 0 50%) 0 0/2px 2px"></div>
<div class="ab" style="left:206px;top:467px;width:7px;height:16px;border:1px solid;border-color:#fff #808080 #808080 #fff;background:#f0f0f0"></div>
<div class="ab" style="left:214px;top:467px;width:16px;height:16px;border:1px solid;border-color:#fff #808080 #808080 #fff;background:#f0f0f0"></div>
<svg class="ab" style="left:218px;top:471px" width="5" height="8"><path d="M5 0V8L0 4Z" fill="#000"/></svg>
<div class="ab" style="left:230px;top:467px;width:16px;height:16px;border:1px solid;border-color:#fff #808080 #808080 #fff;background:#f0f0f0"></div>
<div class="ab" style="left:206px;top:483px;width:794px;height:24px;background:#f0f0f0"></div>
<div class="ab" style="left:205px;top:467px;width:1px;height:38px;background:#808080"></div>
<svg class="ab" style="left:205px;top:483px" width="795" height="24">
<path d="M0 3.5H795" stroke="#505050" stroke-width="1"/>
<path d="M2 3.5L11 20.5H74Q77 20.5 76 17L72 3.5" fill="#f6f6fc" stroke="#404040" stroke-width="1"/>
<path d="M70.5 3.5L78.5 20.5H152.5L160.5 3.5" fill="#fff" stroke="#404040" stroke-width="1"/>
</svg>
<div class="t" style="left:218px;top:489px;font-size:12px;color:#1a1a60"><span class="m">_</span><span class="c">启</span><span class="c">动</span><span class="c">窗</span><span class="c">口</span></div>
<div class="t" style="left:285px;top:489px;font-size:12px;color:#000;font-weight:bold"><span class="c">窗</span><span class="c">口</span><span class="c">程</span><span class="c">序</span><span class="c">集</span><span class="m">1</span></div>
<div class="ab" style="left:206px;top:505px;width:794px;height:1px;background:#fff"></div>
<div class="ab" style="left:206px;top:506px;width:794px;height:1px;background:#a0a0a0"></div>
<div class="ab" style="left:0;top:507px;width:1000px;height:1px;background:#a0a0a0"></div>
<div class="ab" style="left:0;top:508px;width:1000px;height:1px;background:#fff"></div>
<svg class="ab" style="left:5px;top:514px" width="9" height="8"><path d="M1.5 1L7.5 7M7.5 1L1.5 7" stroke="#000" stroke-width="1.6"/></svg>
<div class="ab" style="left:5px;top:527px;width:8px;height:8px;border:1px solid #000;border-top-width:2px"></div>
<div class="ab" style="left:9px;top:540px;width:1px;height:200px;background:#a8a8a8"></div>
<div class="ab" style="left:20px;top:513px;width:980px;height:24px;background:#f0f0f0"></div>
<div class="ab" style="left:20px;top:536px;width:980px;height:1px;background:#a0a0a0"></div>
<div class="ab" style="left:73px;top:512px;width:57px;height:25px;border-top:1px solid #fff;border-left:1px solid #fff;border-right:1px solid #808080;background:#f0f0f0"></div>
<div class="ab" style="left:193px;top:516px;width:1px;height:18px;background:#a0a0a0"></div>
<div class="ab" style="left:194px;top:516px;width:1px;height:18px;background:#fff"></div>
<div class="ab" style="left:261px;top:516px;width:1px;height:18px;background:#a0a0a0"></div>
<div class="ab" style="left:262px;top:516px;width:1px;height:18px;background:#fff"></div>
<div class="ab" style="left:327px;top:516px;width:1px;height:18px;background:#a0a0a0"></div>
<div class="ab" style="left:328px;top:516px;width:1px;height:18px;background:#fff"></div>
<div class="ab" style="left:388px;top:516px;width:1px;height:18px;background:#a0a0a0"></div>
<div class="ab" style="left:389px;top:516px;width:1px;height:18px;background:#fff"></div>
<div class="ab" style="left:449px;top:516px;width:1px;height:18px;background:#a0a0a0"></div>
<div class="ab" style="left:450px;top:516px;width:1px;height:18px;background:#fff"></div>
<div class="ab" style="left:527px;top:516px;width:1px;height:18px;background:#a0a0a0"></div>
<div class="ab" style="left:528px;top:516px;width:1px;height:18px;background:#fff"></div>
<div class="t" style="left:46px;top:519px;font-size:12px;color:#000"><span class="c">提</span><span class="c">示</span></div>
<div class="t" style="left:99px;top:519px;font-size:12px;color:#000"><span class="c">输</span><span class="c">出</span></div>
<div class="t" style="left:156px;top:519px;font-size:12px;color:#000"><span class="c">调</span><span class="c">用</span><span class="c">表</span></div>
<div class="t" style="left:220px;top:519px;font-size:12px;color:#000"><span class="c">监</span><span class="c">视</span><span class="c">表</span></div>
<div class="t" style="left:288px;top:519px;font-size:12px;color:#000"><span class="c">变</span><span class="c">量</span><span class="c">表</span></div>
<div class="t" style="left:354px;top:519px;font-size:12px;color:#000"><span class="c">搜</span><span class="c">寻</span><span class="m">1</span></div>
<div class="t" style="left:415px;top:519px;font-size:12px;color:#000"><span class="c">搜</span><span class="c">寻</span><span class="m">2</span></div>
<div class="t" style="left:476px;top:519px;font-size:12px;color:#000"><span class="c">剪</span><span class="c">辑</span><span class="c">历</span><span class="c">史</span></div>
<svg class="ab" style="left:27px;top:516px" width="12" height="17"><path d="M2.5 5.5Q2.5 1.5 6 1.5Q9.5 1.5 9.5 5Q9.5 7 7 8.5V11" fill="none" stroke="#222" stroke-width="2.6"/><path d="M2.5 5.5Q2.5 1.5 6 1.5Q9.5 1.5 9.5 5Q9.5 7 7 8.5V11" fill="none" stroke="#f0d800" stroke-width="1"/><rect x="5" y="12.5" width="3" height="3" fill="#222"/></svg>
<svg class="ab" style="left:82px;top:517px" width="12" height="14" shape-rendering="crispEdges"><path d="M0 0H11V14H0Z" fill="#111"/><path d="M1 2H10V13H1Z" fill="#fff"/><path d="M2 4H8V5H2ZM2 6H8V7H2ZM2 8H8V9H2ZM2 10H6V11H2Z" fill="#111"/></svg>
<svg class="ab" style="left:137px;top:518px" width="12" height="13" shape-rendering="crispEdges"><path d="M0 0H2V2H0ZM4 0H6V2H4ZM8 0H10V2H8ZM0 3H2V5H0ZM4 3H6V5H4ZM8 3H10V5H8ZM0 6H2V8H0ZM4 6H6V8H4ZM8 6H10V8H8ZM0 9H2V11H0ZM4 9H6V11H4ZM8 9H10V11H8Z" fill="#111"/></svg>
<svg class="ab" style="left:201px;top:516px" width="16" height="16"><circle cx="6.5" cy="6.5" r="4.8" fill="none" stroke="#111" stroke-width="1.8"/><path d="M10 10L14.5 14.5" stroke="#111" stroke-width="2.4"/></svg>
<svg class="ab" style="left:267px;top:517px" width="17" height="13"><path d="M1 7L5.5 2.5L9 6L5.5 10.5Z" fill="#e8d000" stroke="#222"/><path d="M7.5 7L11.5 2.5L16 7L11.5 11Z" fill="#fff" stroke="#222"/></svg>
<svg class="ab" style="left:334px;top:516px" width="16" height="16" shape-rendering="crispEdges"><path d="M0 0H11V14H0Z" fill="#111"/><path d="M2 2H9V12H2Z" fill="#fff"/><path d="M3 4H5V5H3ZM3 6H5V7H3ZM3 8H5V9H3ZM3 10H5V11H3Z" fill="#111"/><circle cx="8.5" cy="8" r="2.8" fill="#ddd" stroke="#111" stroke-width="1.3" shape-rendering="auto"/><path d="M10.5 10.5L14.5 14.5" stroke="#111" stroke-width="2" shape-rendering="auto"/></svg>
<svg class="ab" style="left:395px;top:516px" width="16" height="16" shape-rendering="crispEdges"><path d="M0 0H11V14H0Z" fill="#111"/><path d="M2 2H9V12H2Z" fill="#fff"/><path d="M3 4H5V5H3ZM3 6H5V7H3ZM3 8H5V9H3ZM3 10H5V11H3Z" fill="#111"/><circle cx="8.5" cy="8" r="2.8" fill="#ddd" stroke="#111" stroke-width="1.3" shape-rendering="auto"/><path d="M10.5 10.5L14.5 14.5" stroke="#111" stroke-width="2" shape-rendering="auto"/></svg>
<svg class="ab" style="left:458px;top:517px" width="11" height="14" shape-rendering="crispEdges"><path d="M0 0H10V14H0Z" fill="#111"/><path d="M1 1H9V13H1Z" fill="#fff"/><path d="M2 3H8V4H2ZM2 5H8V6H2ZM2 7H8V8H2ZM2 9H6V10H2Z" fill="#111"/></svg>
<div class="ab" style="left:22px;top:537px;width:978px;height:206px;background:#000"></div>
<div class="t" style="left:35px;top:541px;font-size:12px;color:#e8e8e8;white-space:pre"><span class="c">“</span><span class="c">按</span><span class="c">钮</span><span class="m">_</span><span class="c">寻</span><span class="c">找</span><span class="c">组</span><span class="c">件</span><span class="c">”</span></div>
<div class="ab" style="left:27px;top:546px;width:3px;height:3px;background:#808040;clip-path:polygon(0 0,30% 0,50% 35%,70% 0,100% 0,65% 50%,100% 100%,70% 100%,50% 65%,30% 100%,0 100%,35% 50%)"></div>
<div class="t" style="left:35px;top:552px;font-size:12px;color:#e8e8e8;white-space:pre"><span class="c">“</span><span class="c">按</span><span class="c">钮</span><span class="m">13</span><span class="c">”</span></div>
<div class="ab" style="left:27px;top:557px;width:3px;height:3px;background:#808040;clip-path:polygon(0 0,30% 0,50% 35%,70% 0,100% 0,65% 50%,100% 100%,70% 100%,50% 65%,30% 100%,0 100%,35% 50%)"></div>
<div class="t" style="left:35px;top:563px;font-size:12px;color:#e8e8e8;white-space:pre"><span class="c">“</span><span class="c">按</span><span class="c">钮</span><span class="m">14</span><span class="c">”</span></div>
<div class="ab" style="left:27px;top:568px;width:3px;height:3px;background:#808040;clip-path:polygon(0 0,30% 0,50% 35%,70% 0,100% 0,65% 50%,100% 100%,70% 100%,50% 65%,30% 100%,0 100%,35% 50%)"></div>
<div class="t" style="left:35px;top:575px;font-size:12px;color:#e8e8e8;white-space:pre"><span class="c">“</span><span class="c">按</span><span class="c">钮</span><span class="m">15</span><span class="c">”</span></div>
<div class="ab" style="left:27px;top:580px;width:3px;height:3px;background:#808040;clip-path:polygon(0 0,30% 0,50% 35%,70% 0,100% 0,65% 50%,100% 100%,70% 100%,50% 65%,30% 100%,0 100%,35% 50%)"></div>
<div class="t" style="left:35px;top:586px;font-size:12px;color:#e8e8e8;white-space:pre"><span class="c">“</span><span class="c">按</span><span class="c">钮</span><span class="m">16</span><span class="c">”</span></div>
<div class="ab" style="left:27px;top:591px;width:3px;height:3px;background:#808040;clip-path:polygon(0 0,30% 0,50% 35%,70% 0,100% 0,65% 50%,100% 100%,70% 100%,50% 65%,30% 100%,0 100%,35% 50%)"></div>
<div class="t" style="left:35px;top:597px;font-size:12px;color:#e8e8e8;white-space:pre"><span class="c">“</span><span class="c">按</span><span class="c">钮</span><span class="m">9</span><span class="c">”</span></div>
<div class="ab" style="left:27px;top:602px;width:3px;height:3px;background:#808040;clip-path:polygon(0 0,30% 0,50% 35%,70% 0,100% 0,65% 50%,100% 100%,70% 100%,50% 65%,30% 100%,0 100%,35% 50%)"></div>
<div class="t" style="left:35px;top:609px;font-size:12px;color:#e8e8e8;white-space:pre"><span class="c">“</span><span class="c">按</span><span class="c">钮</span><span class="m">10</span><span class="c">”</span></div>
<div class="ab" style="left:27px;top:614px;width:3px;height:3px;background:#808040;clip-path:polygon(0 0,30% 0,50% 35%,70% 0,100% 0,65% 50%,100% 100%,70% 100%,50% 65%,30% 100%,0 100%,35% 50%)"></div>
<div class="t" style="left:35px;top:620px;font-size:12px;color:#e8e8e8;white-space:pre"><span class="c">“</span><span class="c">按</span><span class="c">钮</span><span class="m">11</span><span class="c">”</span></div>
<div class="ab" style="left:27px;top:625px;width:3px;height:3px;background:#808040;clip-path:polygon(0 0,30% 0,50% 35%,70% 0,100% 0,65% 50%,100% 100%,70% 100%,50% 65%,30% 100%,0 100%,35% 50%)"></div>
<div class="t" style="left:35px;top:631px;font-size:12px;color:#e8e8e8;white-space:pre"><span class="c">“</span><span class="c">按</span><span class="c">钮</span><span class="m">12</span><span class="c">”</span></div>
<div class="ab" style="left:27px;top:636px;width:3px;height:3px;background:#808040;clip-path:polygon(0 0,30% 0,50% 35%,70% 0,100% 0,65% 50%,100% 100%,70% 100%,50% 65%,30% 100%,0 100%,35% 50%)"></div>
<div class="t" style="left:35px;top:642px;font-size:12px;color:#e8e8e8;white-space:pre"><span class="c">“</span><span class="c">按</span><span class="c">钮</span><span class="m">5</span><span class="c">”</span></div>
<div class="ab" style="left:27px;top:647px;width:3px;height:3px;background:#808040;clip-path:polygon(0 0,30% 0,50% 35%,70% 0,100% 0,65% 50%,100% 100%,70% 100%,50% 65%,30% 100%,0 100%,35% 50%)"></div>
<div class="t" style="left:35px;top:654px;font-size:12px;color:#e8e8e8;white-space:pre"><span class="c">“</span><span class="c">按</span><span class="c">钮</span><span class="m">6</span><span class="c">”</span></div>
<div class="ab" style="left:27px;top:659px;width:3px;height:3px;background:#808040;clip-path:polygon(0 0,30% 0,50% 35%,70% 0,100% 0,65% 50%,100% 100%,70% 100%,50% 65%,30% 100%,0 100%,35% 50%)"></div>
<div class="t" style="left:35px;top:665px;font-size:12px;color:#e8e8e8;white-space:pre"><span class="c">“</span><span class="c">按</span><span class="c">钮</span><span class="m">7</span><span class="c">”</span></div>
<div class="ab" style="left:27px;top:670px;width:3px;height:3px;background:#808040;clip-path:polygon(0 0,30% 0,50% 35%,70% 0,100% 0,65% 50%,100% 100%,70% 100%,50% 65%,30% 100%,0 100%,35% 50%)"></div>
<div class="t" style="left:35px;top:676px;font-size:12px;color:#e8e8e8;white-space:pre"><span class="c">“</span><span class="c">按</span><span class="c">钮</span><span class="m">8</span><span class="c">”</span></div>
<div class="ab" style="left:27px;top:681px;width:3px;height:3px;background:#808040;clip-path:polygon(0 0,30% 0,50% 35%,70% 0,100% 0,65% 50%,100% 100%,70% 100%,50% 65%,30% 100%,0 100%,35% 50%)"></div>
<div class="t" style="left:35px;top:688px;font-size:12px;color:#e8e8e8;white-space:pre"><span class="c">“</span><span class="c">按</span><span class="c">钮</span><span class="m">4</span><span class="c">”</span></div>
<div class="ab" style="left:27px;top:693px;width:3px;height:3px;background:#808040;clip-path:polygon(0 0,30% 0,50% 35%,70% 0,100% 0,65% 50%,100% 100%,70% 100%,50% 65%,30% 100%,0 100%,35% 50%)"></div>
<div class="t" style="left:35px;top:699px;font-size:12px;color:#e8e8e8;white-space:pre"><span class="c">“</span><span class="c">按</span><span class="c">钮</span><span class="m">3</span><span class="c">”</span></div>
<div class="ab" style="left:27px;top:704px;width:3px;height:3px;background:#808040;clip-path:polygon(0 0,30% 0,50% 35%,70% 0,100% 0,65% 50%,100% 100%,70% 100%,50% 65%,30% 100%,0 100%,35% 50%)"></div>
<div class="t" style="left:35px;top:710px;font-size:12px;color:#e8e8e8;white-space:pre"><span class="c">“</span><span class="c">按</span><span class="c">钮</span><span class="m">2</span><span class="c">”</span></div>
<div class="ab" style="left:27px;top:715px;width:3px;height:3px;background:#808040;clip-path:polygon(0 0,30% 0,50% 35%,70% 0,100% 0,65% 50%,100% 100%,70% 100%,50% 65%,30% 100%,0 100%,35% 50%)"></div>
<div class="t" style="left:35px;top:722px;font-size:12px;color:#e8e8e8;white-space:pre"><span class="c">“</span><span class="c">按</span><span class="c">钮</span><span class="m">1</span><span class="c">”</span></div>
<div class="ab" style="left:27px;top:727px;width:3px;height:3px;background:#808040;clip-path:polygon(0 0,30% 0,50% 35%,70% 0,100% 0,65% 50%,100% 100%,70% 100%,50% 65%,30% 100%,0 100%,35% 50%)"></div>
<div class="ab" style="left:540px;top:264px;width:439px;height:326px;background:rgba(0,0,0,.3);border:1px solid #c4c4c4;border-radius:6px 6px 4px 4px;box-shadow:0 0 0 1px rgba(0,0,0,.6)"></div>
<div class="ab" style="left:541px;top:265px;width:437px;height:25px;background:#000;border-radius:5px 5px 0 0"></div>
<div class="ab" style="left:552px;top:266px;width:140px;height:21px;background:linear-gradient(90deg,rgba(130,130,130,0),rgba(140,140,140,.9) 12%,rgba(140,140,140,.9) 85%,rgba(130,130,130,0));-webkit-mask-image:linear-gradient(transparent,#000 30%,#000 75%,transparent)"></div>
<svg class="ab" style="left:547px;top:269px" width="16" height="16" viewBox="0 0 16 16">
<rect x="0" y="0" width="16" height="16" rx="2" fill="#1f7a74"/>
<rect x="2" y="2" width="12" height="3" rx="1" fill="none" stroke="#d8ffff" stroke-width="1"/>
<path d="M2 13 L8 7 M5 14 L12 7 M9 14 L14 9" stroke="#e8ffff" stroke-width="1.6"/></svg>
<div class="t" style="left:567px;top:270px;font-size:12px;color:#161616;"><span class="c">易</span><span class="c">语</span><span class="c">言</span><span class="c">寻</span><span class="c">找</span><span class="c">组</span><span class="c">件</span><span class="c">例</span><span class="c">程</span></div>
<svg class="ab" style="left:946px;top:266px" width="11" height="11"><path d="M1.5 1.5L9.5 9.5M9.5 1.5L1.5 9.5" stroke="#fff" stroke-width="2.2"/></svg>
<div class="ab" style="left:546px;top:290px;width:426px;height:293px;background:#f0f0f0;border:1px solid #fff;box-shadow:0 0 0 1px #808080,1px 1px 0 2px #5a5a5a,2px 2px 0 3px rgba(0,0,0,.85)"></div>
<div class="ab" style="left:585px;top:329px;width:77px;height:31px;background:#f0f0f0;border-top:1px solid #fff;border-left:1px solid #fff;border-right:2px solid #6a6a6a;border-bottom:2px solid #6a6a6a;box-shadow:inset -1px -1px 0 #a0a0a0"></div>
<div class="t" style="left:585px;top:338px;width:77px;text-align:center;font-size:12px;color:#000">按钮</div>
<div class="ab" style="left:669px;top:329px;width:77px;height:31px;background:#f0f0f0;border-top:1px solid #fff;border-left:1px solid #fff;border-right:2px solid #6a6a6a;border-bottom:2px solid #6a6a6a;box-shadow:inset -1px -1px 0 #a0a0a0"></div>
<div class="t" style="left:669px;top:338px;width:77px;text-align:center;font-size:12px;color:#000">按钮</div>
<div class="ab" style="left:752px;top:329px;width:77px;height:31px;background:#f0f0f0;border-top:1px solid #fff;border-left:1px solid #fff;border-right:2px solid #6a6a6a;border-bottom:2px solid #6a6a6a;box-shadow:inset -1px -1px 0 #a0a0a0"></div>
<div class="t" style="left:752px;top:338px;width:77px;text-align:center;font-size:12px;color:#000">按钮</div>
<div class="ab" style="left:836px;top:329px;width:77px;height:31px;background:#f0f0f0;border-top:1px solid #fff;border-left:1px solid #fff;border-right:2px solid #6a6a6a;border-bottom:2px solid #6a6a6a;box-shadow:inset -1px -1px 0 #a0a0a0"></div>
<div class="t" style="left:836px;top:338px;width:77px;text-align:center;font-size:12px;color:#000">按钮</div>
<div class="ab" style="left:585px;top:375px;width:77px;height:31px;background:#f0f0f0;border-top:1px solid #fff;border-left:1px solid #fff;border-right:2px solid #6a6a6a;border-bottom:2px solid #6a6a6a;box-shadow:inset -1px -1px 0 #a0a0a0"></div>
<div class="t" style="left:585px;top:384px;width:77px;text-align:center;font-size:12px;color:#000">按钮</div>
<div class="ab" style="left:669px;top:375px;width:77px;height:31px;background:#f0f0f0;border-top:1px solid #fff;border-left:1px solid #fff;border-right:2px solid #6a6a6a;border-bottom:2px solid #6a6a6a;box-shadow:inset -1px -1px 0 #a0a0a0"></div>
<div class="t" style="left:669px;top:384px;width:77px;text-align:center;font-size:12px;color:#000">按钮</div>
<div class="ab" style="left:752px;top:375px;width:77px;height:31px;background:#f0f0f0;border-top:1px solid #fff;border-left:1px solid #fff;border-right:2px solid #6a6a6a;border-bottom:2px solid #6a6a6a;box-shadow:inset -1px -1px 0 #a0a0a0"></div>
<div class="t" style="left:752px;top:384px;width:77px;text-align:center;font-size:12px;color:#000">按钮</div>
<div class="ab" style="left:836px;top:375px;width:77px;height:31px;background:#f0f0f0;border-top:1px solid #fff;border-left:1px solid #fff;border-right:2px solid #6a6a6a;border-bottom:2px solid #6a6a6a;box-shadow:inset -1px -1px 0 #a0a0a0"></div>
<div class="t" style="left:836px;top:384px;width:77px;text-align:center;font-size:12px;color:#000">按钮</div>
<div class="ab" style="left:585px;top:413px;width:77px;height:31px;background:#f0f0f0;border-top:1px solid #fff;border-left:1px solid #fff;border-right:2px solid #6a6a6a;border-bottom:2px solid #6a6a6a;box-shadow:inset -1px -1px 0 #a0a0a0"></div>
<div class="t" style="left:585px;top:422px;width:77px;text-align:center;font-size:12px;color:#000">按钮</div>
<div class="ab" style="left:669px;top:413px;width:77px;height:31px;background:#f0f0f0;border-top:1px solid #fff;border-left:1px solid #fff;border-right:2px solid #6a6a6a;border-bottom:2px solid #6a6a6a;box-shadow:inset -1px -1px 0 #a0a0a0"></div>
<div class="t" style="left:669px;top:422px;width:77px;text-align:center;font-size:12px;color:#000">按钮</div>
<div class="ab" style="left:752px;top:413px;width:77px;height:31px;background:#f0f0f0;border-top:1px solid #fff;border-left:1px solid #fff;border-right:2px solid #6a6a6a;border-bottom:2px solid #6a6a6a;box-shadow:inset -1px -1px 0 #a0a0a0"></div>
<div class="t" style="left:752px;top:422px;width:77px;text-align:center;font-size:12px;color:#000">按钮</div>
<div class="ab" style="left:836px;top:413px;width:77px;height:31px;background:#f0f0f0;border-top:1px solid #fff;border-left:1px solid #fff;border-right:2px solid #6a6a6a;border-bottom:2px solid #6a6a6a;box-shadow:inset -1px -1px 0 #a0a0a0"></div>
<div class="t" style="left:836px;top:422px;width:77px;text-align:center;font-size:12px;color:#000">按钮</div>
<div class="ab" style="left:585px;top:451px;width:77px;height:31px;background:#f0f0f0;border-top:1px solid #fff;border-left:1px solid #fff;border-right:2px solid #6a6a6a;border-bottom:2px solid #6a6a6a;box-shadow:inset -1px -1px 0 #a0a0a0"></div>
<div class="t" style="left:585px;top:460px;width:77px;text-align:center;font-size:12px;color:#000">按钮</div>
<div class="ab" style="left:669px;top:451px;width:77px;height:31px;background:#f0f0f0;border-top:1px solid #fff;border-left:1px solid #fff;border-right:2px solid #6a6a6a;border-bottom:2px solid #6a6a6a;box-shadow:inset -1px -1px 0 #a0a0a0"></div>
<div class="t" style="left:669px;top:460px;width:77px;text-align:center;font-size:12px;color:#000">按钮</div>
<div class="ab" style="left:752px;top:451px;width:77px;height:31px;background:#f0f0f0;border-top:1px solid #fff;border-left:1px solid #fff;border-right:2px solid #6a6a6a;border-bottom:2px solid #6a6a6a;box-shadow:inset -1px -1px 0 #a0a0a0"></div>
<div class="t" style="left:752px;top:460px;width:77px;text-align:center;font-size:12px;color:#000">按钮</div>
<div class="ab" style="left:836px;top:451px;width:77px;height:31px;background:#f0f0f0;border-top:1px solid #fff;border-left:1px solid #fff;border-right:2px solid #6a6a6a;border-bottom:2px solid #6a6a6a;box-shadow:inset -1px -1px 0 #a0a0a0"></div>
<div class="t" style="left:836px;top:460px;width:77px;text-align:center;font-size:12px;color:#000">按钮</div>
<div class="ab" style="left:707px;top:519px;width:76px;height:31px;background:#f0f0f0;border-top:1px solid #fff;border-left:1px solid #fff;border-right:2px solid #6a6a6a;border-bottom:2px solid #6a6a6a;box-shadow:inset -1px -1px 0 #a0a0a0"></div>
<div class="ab" style="left:710px;top:522px;width:69px;height:24px;border:1px dotted #111"></div>
<div class="t" style="left:707px;top:528px;width:76px;text-align:center;font-size:12px;color:#000">寻找组件</div>
<div class="ab" style="left:232px;top:98px;width:357px;height:293px;border:3px solid #f2f255"></div>
<div class="ab" style="left:24px;top:539px;width:130px;height:196px;border:3px solid #f2f255"></div>
<svg class="ab" style="left:0;top:0" width="1000" height="743" viewBox="0 0 1000 743">
<path d="M596.5 383 L719.5 511 L716.5 514 L732.5 519 L727.5 503.5 L724.5 506.5 L598 382Z" fill="#e63838"/>
<defs><linearGradient id="g2" gradientUnits="userSpaceOnUse" x1="706" y1="544" x2="169" y2="681"><stop offset="0" stop-color="#ee3c3c" stop-opacity=".35"/><stop offset=".35" stop-color="#ee3c3c" stop-opacity=".9"/><stop offset="1" stop-color="#ee3c3c"/></linearGradient></defs>
<path d="M706 544 L183 671.5 L181 670.5 L169 681 L185 685 L184 676.5 L706 545Z" fill="url(#g2)"/>
</svg>
</body></html>
